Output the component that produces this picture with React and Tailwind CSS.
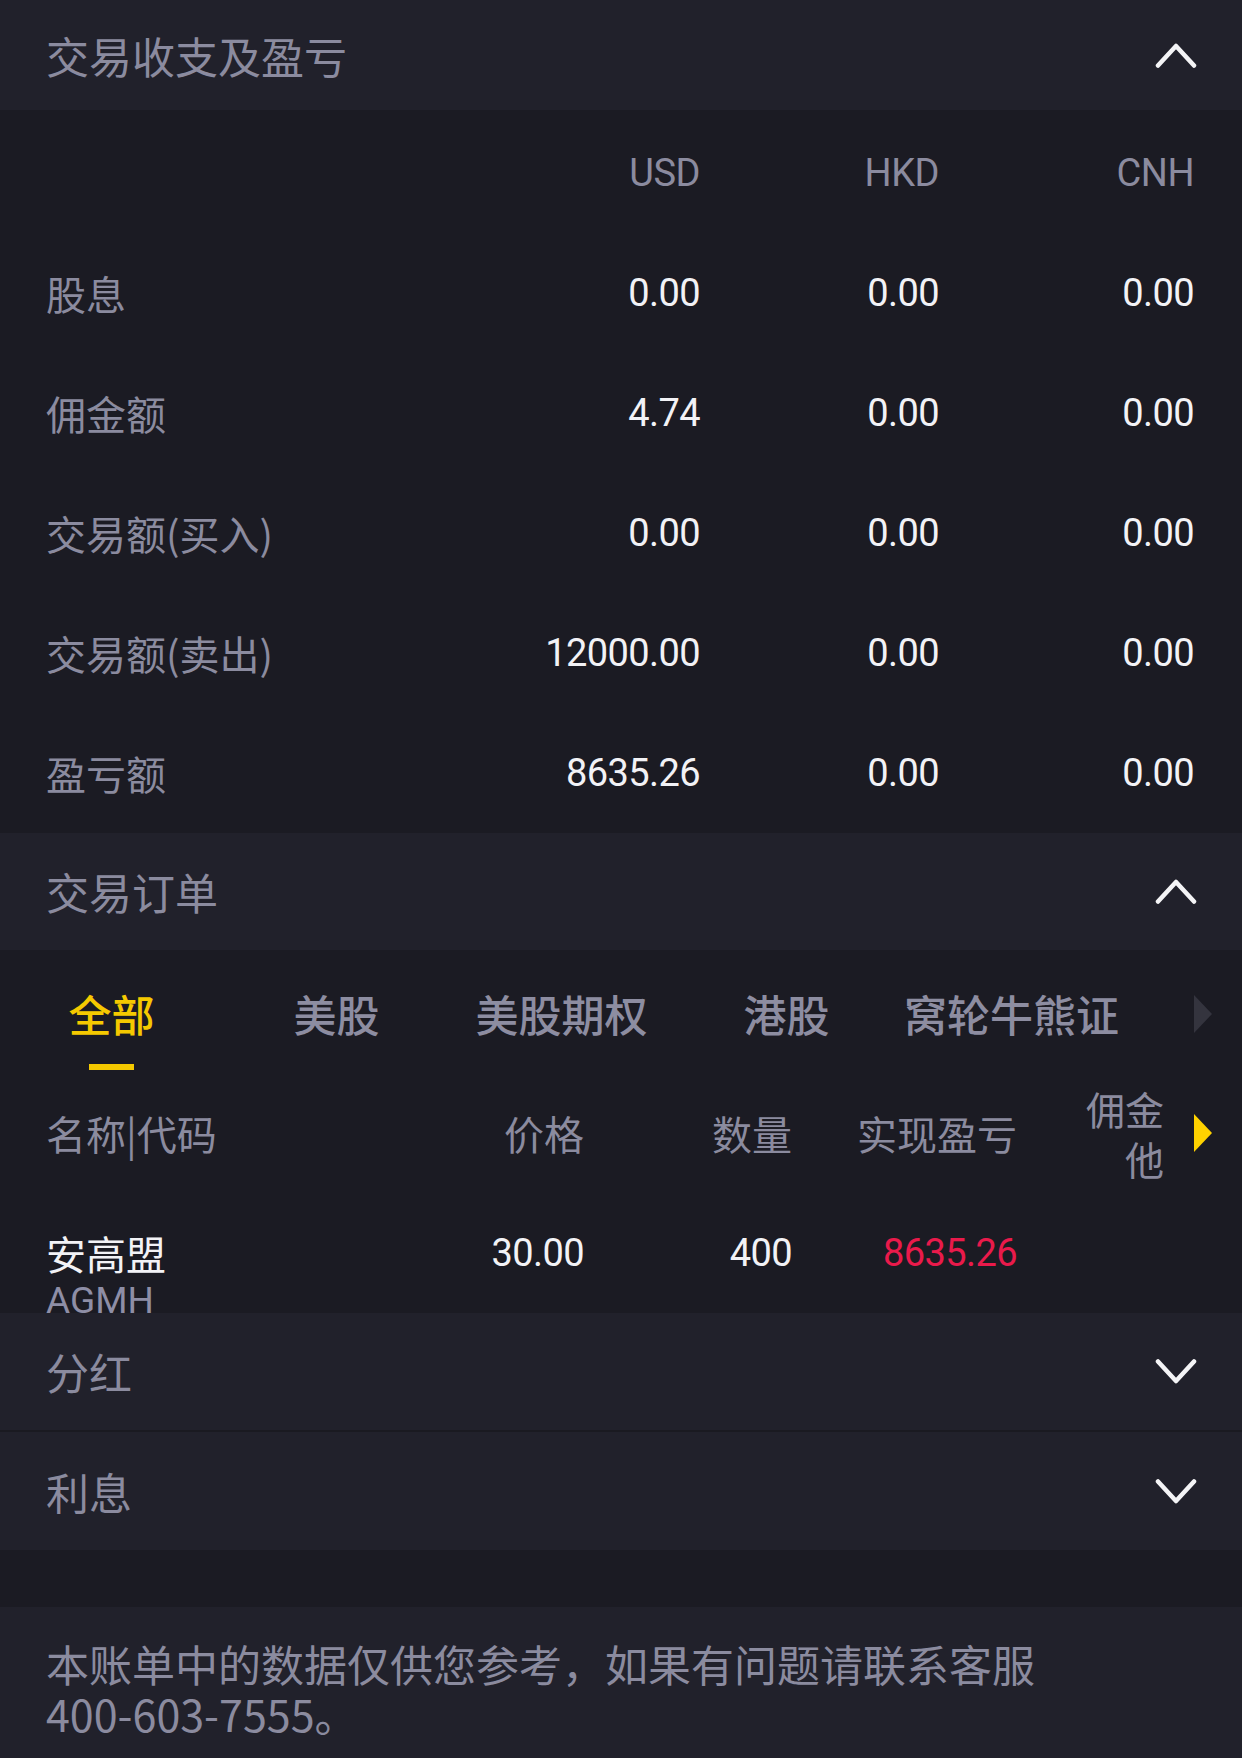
const cjk = { fontFamily: '"Noto Sans CJK SC", "Noto Sans", sans-serif' };
const num = { fontFamily: 'Roboto, "Noto Sans CJK SC", sans-serif' };

const summary = [
  { label: '股息', values: ['0.00', '0.00', '0.00'] },
  { label: '佣金额', values: ['4.74', '0.00', '0.00'] },
  { label: '交易额(买入)', values: ['0.00', '0.00', '0.00'] },
  { label: '交易额(卖出)', values: ['12000.00', '0.00', '0.00'] },
  { label: '盈亏额', values: ['8635.26', '0.00', '0.00'] },
];

const tabs = ['全部', '美股', '美股期权', '港股', '窝轮牛熊证'];

function Chevron({ up }) {
  return (
    <svg width="42" height="25" viewBox="0 0 42 25" fill="none">
      <path
        d={up ? 'M3 22.5 L21 3 L39 22.5' : 'M3 2.5 L21 22 L39 2.5'}
        stroke="#f4f4f6"
        strokeWidth="4.5"
        strokeLinecap="round"
        strokeLinejoin="round"
      />
    </svg>
  );
}

function SectionHeader({ title, up, className }) {
  return (
    <div className={`flex items-center justify-between bg-[#21212b] pl-[46px] pr-[45px] ${className}`}>
      <span className="text-[43px] leading-none text-[#8b8b9f]" style={cjk}>
        {title}
      </span>
      <Chevron up={up} />
    </div>
  );
}

function Triangle({ color }) {
  return (
    <svg width="18" height="38" viewBox="0 0 18 38">
      <path d="M0 0 L18 19 L0 38 Z" fill={color} />
    </svg>
  );
}

export default function App() {
  return (
    <div className="w-[1242px] min-h-[1758px] bg-[#1b1b23]" style={cjk}>
      <SectionHeader title="交易收支及盈亏" up className="h-[110px]" />

      {/* summary table */}
      <div className="pt-[3px] pl-[46px] pr-[48px]">
        <div className="grid h-[120px] grid-cols-[414px_240px_239px_255px] items-center text-right text-[38px] tracking-[-0.5px] text-[#8b8b9f]" style={num}>
          <span />
          <span>USD</span>
          <span>HKD</span>
          <span>CNH</span>
        </div>
        {summary.map((row) => (
          <div key={row.label} className="grid h-[120px] grid-cols-[414px_240px_239px_255px] items-center">
            <span className="text-[40px] leading-none text-[#8b8b9f]" style={cjk}>
              {row.label}
            </span>
            {row.values.map((v, i) => (
              <span key={i} className="text-right text-[38px] leading-none tracking-[-0.6px] text-[#f2f2f6]" style={num}>
                {v}
              </span>
            ))}
          </div>
        ))}
      </div>

      <SectionHeader title="交易订单" up className="h-[117px]" />

      {/* orders */}
      <div className="h-[363px] overflow-hidden">
        <div className="flex h-[126px] items-start">
          <div className="ml-[-1px] flex flex-1 overflow-hidden">
            {tabs.map((t, i) => (
              <div key={t} className="flex w-[225px] shrink-0 flex-col items-center pt-[33px]">
                <span
                  className={`text-[43px] leading-[60px] font-medium ${i === 0 ? 'text-[#f5c900]' : 'text-[#8d8da1]'}`}
                  style={cjk}
                >
                  {t}
                </span>
                {i === 0 && <span className="mt-[21px] h-[6px] w-[45px] bg-[#f5c900]" />}
              </div>
            ))}
          </div>
          <div className="mt-[45px] mr-[30px] ml-[70px]">
            <Triangle color="#34343e" />
          </div>
        </div>

        <div className="flex h-[114px] items-center pl-[46px] pr-[30px] text-[40px] text-[#8b8b9f]">
          <span className="w-[330px] leading-none">名称|代码</span>
          <span className="w-[208px] text-right leading-none">价格</span>
          <span className="w-[208px] text-right leading-none">数量</span>
          <span className="w-[225px] text-right leading-none">实现盈亏</span>
          <span className="flex w-[147px] flex-col items-end text-[39px] leading-[50px]">
            <span>佣金</span>
            <span>他</span>
          </span>
          <span className="ml-[30px] flex">
            <Triangle color="#ffd200" />
          </span>
        </div>

        <div className="flex items-start pl-[46px] pt-[39px]">
          <div className="flex w-[330px] flex-col">
            <span className="text-[40px] leading-[48px] text-[#f2f2f6]">安高盟</span>
            <span className="text-[37px] leading-[48px] text-[#8e8ea6]" style={num}>
              AGMH
            </span>
          </div>
          <span className="w-[208px] text-right text-[38px] leading-[48px] tracking-[-0.6px] text-[#f2f2f6]" style={num}>
            30.00
          </span>
          <span className="w-[208px] text-right text-[38px] leading-[48px] tracking-[-0.6px] text-[#f2f2f6]" style={num}>
            400
          </span>
          <span className="w-[225px] text-right text-[38px] leading-[48px] tracking-[-0.6px] text-[#ea1a4b]" style={num}>
            8635.26
          </span>
        </div>
      </div>

      <SectionHeader title="分红" className="h-[117px]" />
      <div className="h-[2px] bg-[#1a1a21]" />
      <SectionHeader title="利息" className="h-[118px]" />

      <div className="h-[57px]" />

      <div className="min-h-[151px] bg-[#21212b] pl-[46px] pr-[46px] pt-[31px] pb-[20px]">
        <p className="text-[43px] leading-[50px] text-[#8b8b9f]">
          本账单中的数据仅供您参考，如果有问题请联系客服
          <br />
          400-603-7555。
        </p>
      </div>
    </div>
  );
}
